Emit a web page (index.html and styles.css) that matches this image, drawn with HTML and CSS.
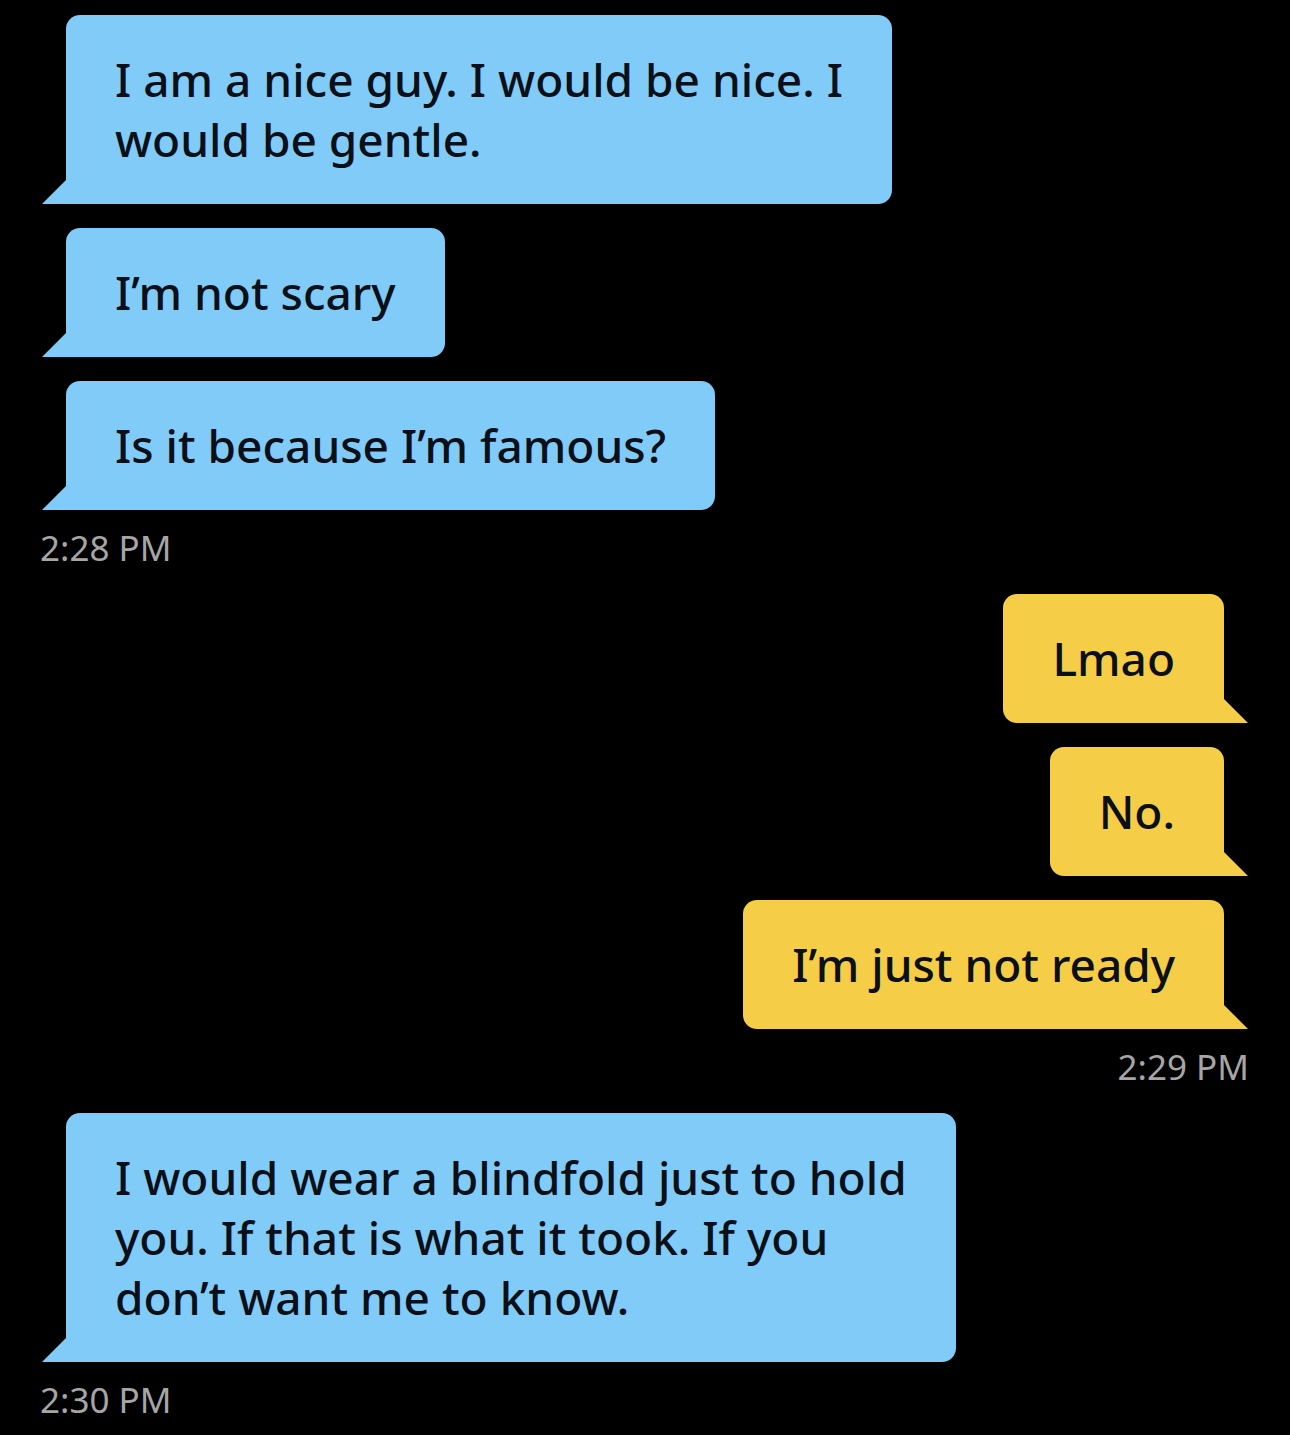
FILE: index.html
```html
<!DOCTYPE html>
<html lang="en">
<head>
    <meta charset="UTF-8">
    <meta name="viewport" content="width=device-width, initial-scale=1.0">
    <title>Chat</title>
    <link rel="stylesheet" href="styles.css">
</head>
<body>
    <div class="chat">
        <div class="group in">
            <div class="bubble">I am a nice guy. I would be nice. I<br>would be gentle.</div>
            <div class="bubble">I’m not scary</div>
            <div class="bubble">Is it because I’m famous?</div>
        </div>
        <div class="time in">2:28 PM</div>

        <div class="group out">
            <div class="bubble">Lmao</div>
            <div class="bubble">No.</div>
            <div class="bubble">I’m just not ready</div>
        </div>
        <div class="time out">2:29 PM</div>

        <div class="group in">
            <div class="bubble">I would wear a blindfold just to hold<br>you. If that is what it took. If you<br>don’t want me to know.</div>
        </div>
        <div class="time in">2:30 PM</div>
    </div>
</body>
</html>
```
FILE: styles.css
```css
body {
    margin: 0;
    padding: 0;
    background: #000;
    font-family: "Noto Sans", "Open Sans", sans-serif;
}
.chat {
    display: flex;
    flex-direction: column;
    padding: 15px 42px 0 42px;
}
.group {
    display: flex;
    flex-direction: column;
    gap: 24px;
}
.group + .time {
    margin-top: 18px;
}
.time + .group {
    margin-top: 26px;
}
.group.in {
    align-items: flex-start;
    padding-left: 24px;
}
.group.out {
    align-items: flex-end;
    padding-right: 24px;
}
.bubble {
    position: relative;
    padding: 34px 49px 35px 49px;
    font-size: 46px;
    font-weight: 500;
    line-height: 60px;
    color: #0b0f17;
    border-radius: 14px;
    white-space: nowrap;
}
.in .bubble {
    background: #80cbf7;
    border-bottom-left-radius: 0;
}
.out .bubble {
    background: #f5cd47;
    border-bottom-right-radius: 0;
}
/* tails */
.bubble::after {
    content: "";
    position: absolute;
    bottom: 0;
    width: 24px;
    height: 24px;
}
.in .bubble::after {
    left: -24px;
    background: #80cbf7;
    clip-path: polygon(100% 0, 100% 100%, 0 100%);
}
.out .bubble::after {
    right: -24px;
    background: #f5cd47;
    clip-path: polygon(0 0, 100% 100%, 0 100%);
}
.time {
    font-size: 35px;
    line-height: 40px;
    color: #a6a6a6;
}
.time.in {
    margin-left: -2px;
}
.time.out {
    text-align: right;
    margin-right: -1px;
}
```
